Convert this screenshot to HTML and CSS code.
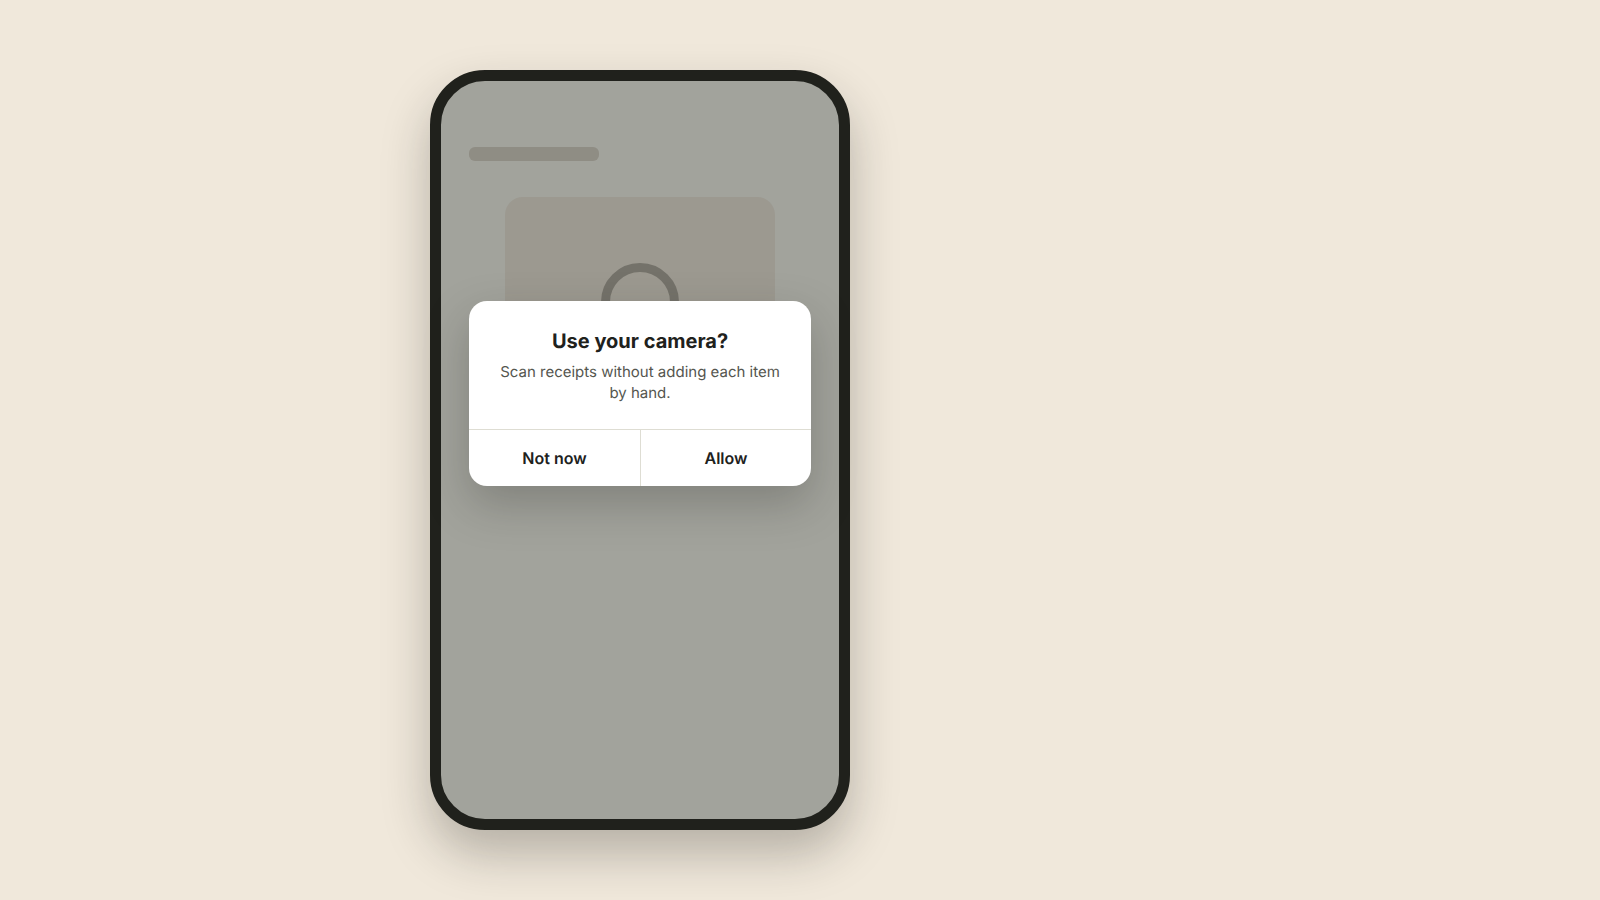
FILE: index.html
```
<!DOCTYPE html>
<html lang="en">
<head>
  <meta charset="UTF-8" />
  <meta name="viewport" content="width=device-width, initial-scale=1.0"/>
  <title>Camera permission</title>
  <link rel="stylesheet" href="styles.css">
</head>
<body>
  <main class="stage">
    <div class="phone">
      <div class="placeholder-title"></div>
      <div class="placeholder-card">
        <div class="lens"></div>
      </div>

      <div class="dialog" role="alertdialog" aria-labelledby="dialog-title" aria-describedby="dialog-text">
        <div class="dialog-body">
          <h1 id="dialog-title">Use your camera?</h1>
          <p id="dialog-text">Scan receipts without adding each item by hand.</p>
        </div>
        <div class="dialog-actions">
          <button type="button">Not now</button>
          <button type="button">Allow</button>
        </div>
      </div>
    </div>
  </main>
</body>
</html>
```

FILE: styles.css
```
* {
  box-sizing: border-box;
}

body {
  margin: 0;
  font-family: Inter, sans-serif;
  text-rendering: geometricPrecision;
  background-color: #f0e8db;
  color: #20211c;
}

.stage {
  width: 80%;
  min-height: 100vh;
  display: flex;
  justify-content: center;
  align-items: center;
}

.phone {
  position: relative;
  width: 100%;
  max-width: 420px;
  min-height: 760px;
  padding: 66px 28px;
  border: 11px solid #20211c;
  border-radius: 55px;
  background-color: #a2a39c;
  box-shadow: 0 24px 48px rgba(32, 33, 28, 0.28);
}

.placeholder-title {
  width: 130px;
  height: 14px;
  border-radius: 6px;
  background-color: #8f8d84;
}

.placeholder-card {
  display: flex;
  justify-content: center;
  align-items: center;
  max-width: 270px;
  height: 210px;
  margin: 36px auto 0;
  border-radius: 18px;
  background-color: #9c9990;
}

.lens {
  width: 78px;
  height: 78px;
  border: 9px solid #74726a;
  border-radius: 50%;
}

/* sits over the dimmed screen */
.dialog {
  position: absolute;
  top: 220px;
  left: 28px;
  right: 28px;
  overflow: hidden;
  border-radius: 18px;
  background-color: #fff;
  box-shadow: 0 18px 45px rgba(32, 33, 28, 0.25);
}

.dialog-body {
  padding: 26px 24px;
  text-align: center;
}

.dialog-body h1 {
  margin: 0 0 6px;
  font-size: 20px;
  line-height: 28px;
  font-weight: 700;
}

.dialog-body p {
  margin: 0;
  font-size: 15px;
  line-height: 21px;
  color: #55564f;
}

.dialog-actions {
  display: grid;
  grid-template-columns: 1fr 1fr;
  border-top: 1px solid #deddd3;
}

.dialog-actions button {
  height: 56px;
  border: none;
  background: none;
  font-family: inherit;
  font-size: 16px;
  font-weight: 600;
  text-rendering: inherit;
  color: inherit;
  cursor: pointer;
}

.dialog-actions button + button {
  border-left: 1px solid #deddd3;
}

.dialog-actions button:hover {
  background-color: #f7f7f3;
}
```
